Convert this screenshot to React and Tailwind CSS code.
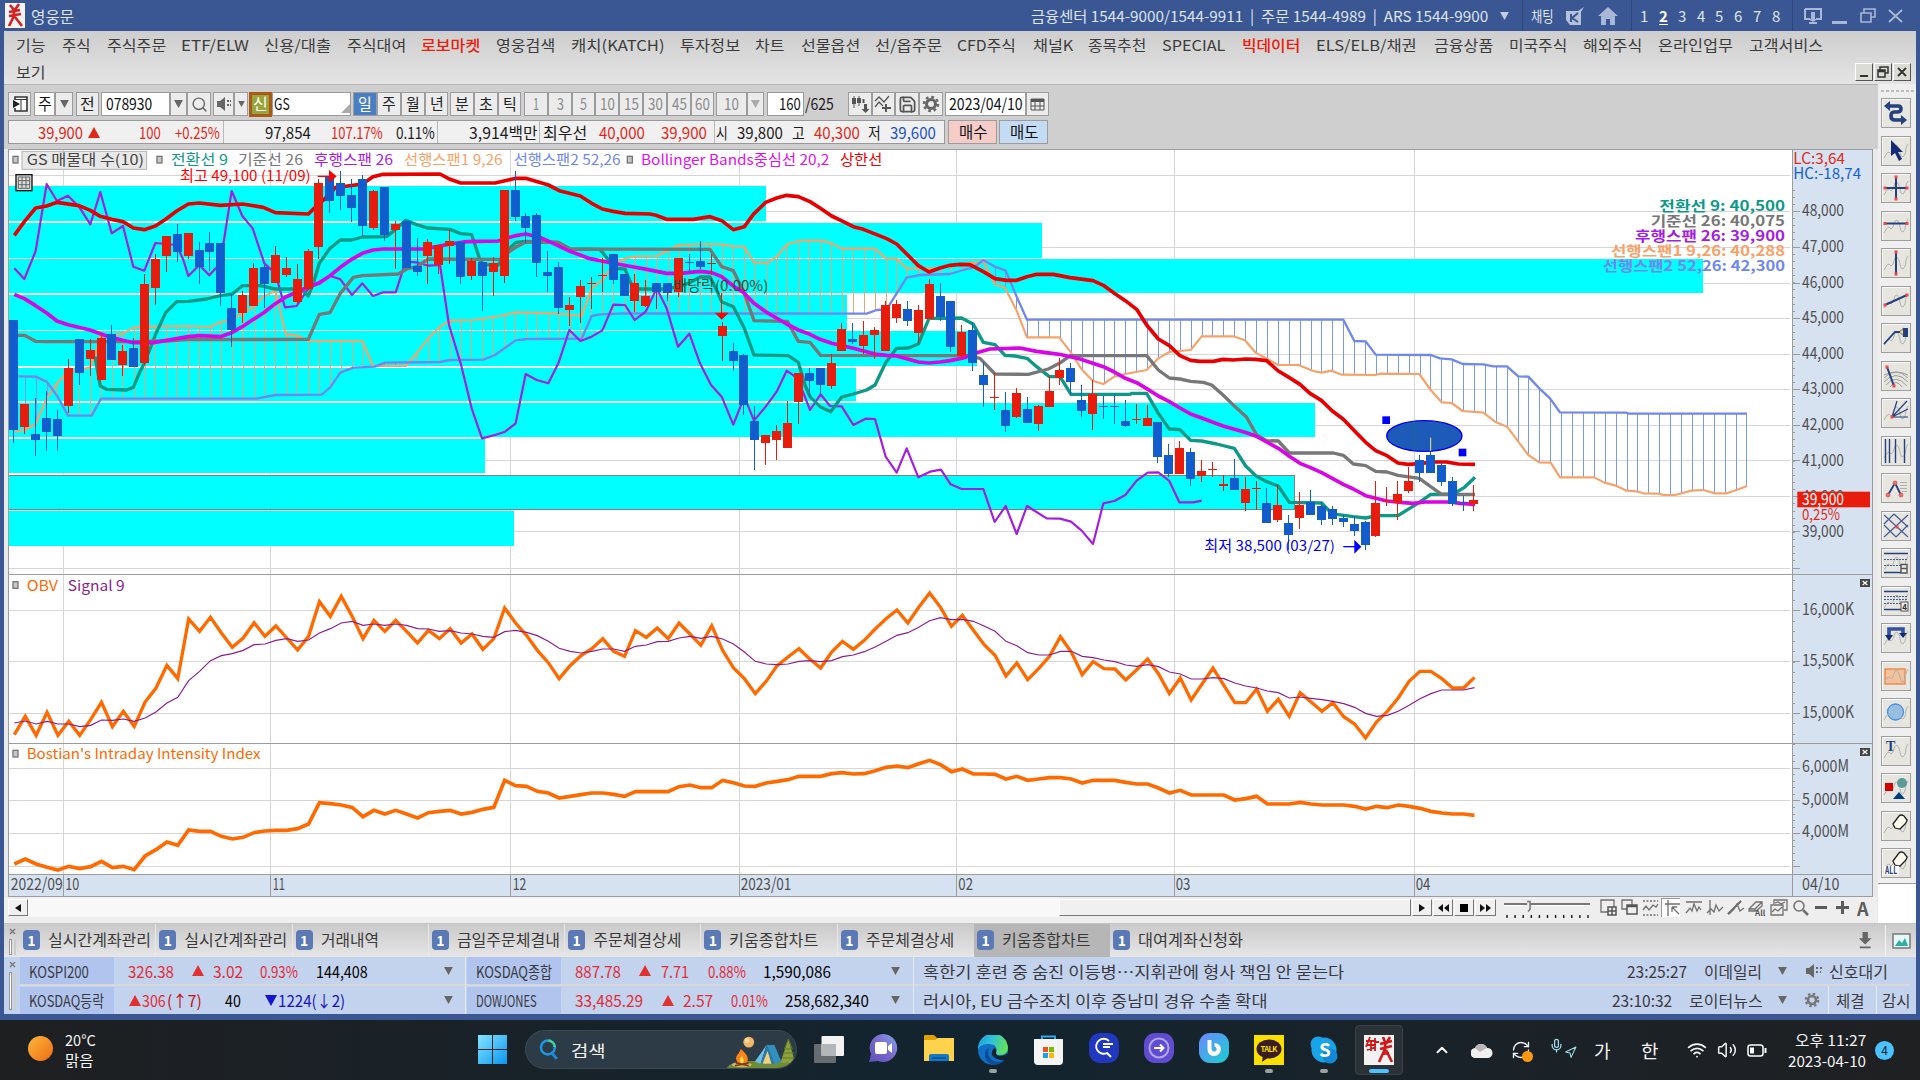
import { useLayoutEffect, useRef, useState } from "react";
import { Home, Search, Settings, Save, Calendar, Wifi, Volume2, ChevronUp, RefreshCw, Mic, Navigation } from "lucide-react";

/* Text squeezed or stretched horizontally to an exact width */
function Fit({ w, children, className = "" }) {
  const ref = useRef(null);
  const [k, setK] = useState(1);
  useLayoutEffect(() => {
    const n = ref.current.offsetWidth;
    if (n) setK(w / n);
  }, [w, children]);
  return (
    <span className={"inline-block shrink-0 whitespace-nowrap " + className} style={{ width: w }}>
      <span ref={ref} className="inline-block origin-left whitespace-pre" style={{ transform: `scaleX(${k})` }}>{children}</span>
    </span>
  );
}

/* A row of items given as [start, end, content, classes]; gaps become margins */
function Run({ from = 0, items, className = "" }) {
  let prev = from;
  return (
    <div className={"flex items-center " + className}>
      {items.map(([a, b, c, cls = ""], i) => {
        const ml = a - prev;
        prev = b;
        return (
          <div key={i} className={"flex shrink-0 items-center " + cls} style={{ marginLeft: ml, width: b - a }}>
            {typeof c === "string" ? <Fit w={b - a}>{c}</Fit> : c}
          </div>
        );
      })}
    </div>
  );
}

const Down = ({ c = "#666", s = 9 }) => (
  <svg width={s} height={s - 1} viewBox="0 0 10 9" className="mx-auto shrink-0"><path d="M0 0H10L5 9Z" fill={c} /></svg>
);
const Up = ({ c = "#e03030" }) => (
  <svg width="12" height="11" viewBox="0 0 12 11" className="shrink-0"><path d="M6 0L12 11H0Z" fill={c} /></svg>
);

/* ---------------- title bar and menu ---------------- */
function TitleBar() {
  const d = <div className="h-[31px] w-px bg-[#2c4780]" />;
  return (
    <div className="flex h-[31px] shrink-0 bg-[#3a5693] text-[15px] text-[#dde4f2]">
      <Run items={[
        [5, 25, <svg width="20" height="25" viewBox="0 0 20 25"><rect width="20" height="25" fill="#f4f4f4" /><path d="M5 2l4 5M14 1l-5 7M4 9l11-2M9 7l0 8M4 13l12-2M9 13L4 23M10 14l7 9" stroke="#d81e1e" strokeWidth="2.6" fill="none" /></svg>],
        [31, 74, "영웅문", "text-base"],
        [1031, 1488, "금융센터 1544-9000/1544-9911  |  주문 1544-4989  |  ARS 1544-9900"],
        [1498, 1510, <Down c="#c3cde2" />],
        [1522, 1523, d],
        [1531, 1554, "채팅"],
        [1565, 1586, <svg width="21" height="20" viewBox="0 0 21 20"><path d="M1 5h12l6-4-3 5v13H5L1 14Z" fill="#b4c1dd" /><path d="M6 8v8M13 7l-6 5 6 4" stroke="#3a5693" strokeWidth="2" fill="none" /></svg>],
        [1598, 1618, <svg width="20" height="18" viewBox="0 0 20 18"><path d="M10 0L20 9h-3v9h-5v-6H8v6H3V9H0Z" fill="#a9b7d6" /></svg>],
        [1631, 1632, d],
        [1640, 1648, "1"],
        [1659, 1669, <span className="border-b border-white font-bold leading-[17px] text-white">2</span>],
        [1678, 1686, "3"], [1697, 1705, "4"], [1715, 1723, "5"], [1734, 1742, "6"], [1753, 1761, "7"], [1772, 1780, "8"],
        [1792, 1793, d],
        [1804, 1822, <svg width="18" height="16" viewBox="0 0 18 16" fill="none" stroke="#a9b7d6" strokeWidth="2"><path d="M1 1H17V11H12M1 1V11H6M5 15H13" /><path d="M7 4h4v7h3l-5 3-5-3h3z" fill="#a9b7d6" stroke="none" /></svg>],
        [1832, 1848, <div className="mt-3.5 h-[3px] w-[15px] bg-[#a9b7d6]" />],
        [1860, 1876, <svg width="16" height="15" viewBox="0 0 16 15" fill="none" stroke="#a9b7d6" strokeWidth="1.6"><path d="M4 5V1H15V9H11M1 5H11V14H1Z" /></svg>],
        [1888, 1903, <svg width="15" height="14" viewBox="0 0 15 14" stroke="#a9b7d6" strokeWidth="1.8"><path d="M1 1L14 13M14 1L1 13" /></svg>],
      ]} />
    </div>
  );
}

const MENU = [
  [16, 46, "기능"], [62, 91, "주식"], [107, 166, "주식주문"], [181, 249, "ETF/ELW"], [264, 331, "신용/대출"], [347, 406, "주식대여"],
  [421, 480, "로보마켓", "font-medium text-[#e8200c]"], [496, 555, "영웅검색"], [571, 665, "캐치(KATCH)"], [680, 740, "투자정보"], [755, 785, "차트"],
  [801, 860, "선물옵션"], [875, 942, "선/옵주문"], [957, 1016, "CFD주식"], [1033, 1073, "채널K"], [1088, 1146, "종목추천"], [1162, 1226, "SPECIAL"],
  [1242, 1300, "빅데이터", "font-medium text-[#e8200c]"], [1316, 1417, "ELS/ELB/채권"], [1434, 1493, "금융상품"], [1509, 1567, "미국주식"],
  [1583, 1642, "해외주식"], [1658, 1733, "온라인업무"], [1749, 1823, "고객서비스"],
];

function MdiButton({ children }) {
  return <div className="flex h-[18px] w-[18px] items-center justify-center border border-b-[#555] border-l-white border-r-[#555] border-t-white bg-[#dcdcd6] text-[#222]">{children}</div>;
}
function MenuBar() {
  return (
    <div className="flex h-[53px] shrink-0 flex-col bg-gradient-to-b from-[#cecece] to-[#e4e4e4] text-[15px] text-[#3c3c3c]">
      <Run from={4} items={MENU} className="h-[29px] pb-0.5" />
      <div className="flex h-6 items-center justify-between pl-3 pr-[5px]">
        <Fit w={30} className="pb-0.5">보기</Fit>
        <div className="flex gap-px">
          <MdiButton><div className="mt-2 h-0.5 w-2 bg-[#333]" /></MdiButton>
          <MdiButton><svg width="12" height="12" viewBox="0 0 12 12" fill="none" stroke="#333" strokeWidth="1.5"><path d="M3 4V1H11V7H8M1 4H8V11H1ZM1 5.5H8" /></svg></MdiButton>
          <MdiButton><svg width="10" height="10" viewBox="0 0 10 10" stroke="#333" strokeWidth="1.8"><path d="M1 1L9 9M9 1L1 9" /></svg></MdiButton>
        </div>
      </div>
    </div>
  );
}

/* ---------------- toolbar ---------------- */
function Box({ children, className = "bg-[#ececec] text-[#222]" }) {
  return <div className={"flex h-6 w-full items-center justify-center border border-[#9c9c9c] " + className}>{children}</div>;
}
const fit = (w, t) => <Fit w={w} className="pb-0.5">{t}</Fit>;
const gray = "bg-[#ebebeb] text-[#8a8a8a]";
const white = "bg-white text-[#111]";

function Toolbar() {
  return (
    <div className="flex h-[65px] shrink-0 flex-col border-t border-[#b4b4b4] bg-[#cfcfcf] pt-[7px] text-base leading-none text-[#1c1c1c]">
      <Run from={4} className="h-6" items={[
        [8, 31, <Box><svg width="18" height="18" viewBox="0 0 18 18"><path d="M4 5V2H16V16H4V13" fill="#fff" stroke="#333" strokeWidth="1.6" /><path d="M4 4.5H16M10 4V16" stroke="#333" /><path d="M2 5L9 9L2 13Z" fill="#222" /></svg></Box>],
        [34, 55, <Box className={white}>{fit(14, "주")}</Box>],
        [55, 73, <Box><Down /></Box>],
        [76, 99, <Box>{fit(15, "전")}</Box>],
        [101, 170, <Box className={white}><div className="w-full pl-1">{fit(46, "078930")}</div></Box>],
        [170, 187, <Box><Down /></Box>],
        [187, 211, <Box><Search size={17} color="#666" /></Box>],
        [213, 234, <Box><svg width="16" height="16" viewBox="0 0 16 16" fill="#666"><path d="M1 5h3l5-4v14l-5-4H1z" /><path d="M11 4h2v2h-2zM14 4h1v2h-1zM11 8h2v2h-2zM14 8h1v2h-1z" /></svg></Box>],
        [234, 248, <Box><Down s={7} /></Box>],
        [249, 272, <div className="flex h-[25px] w-full items-center justify-center border-[3px] border-[#a85a18] bg-[#98a53a] text-white">{fit(15, "신")}</div>],
        [272, 351, <Box className={white}><div className="flex w-full items-end justify-between"><span className="pl-[1px]">{fit(16, "GS")}</span><svg width="9" height="9"><path d="M9 0V9H0Z" fill="#aaa" /></svg></div></Box>],
        [353, 377, <Box className="bg-[#4a7fc4] text-white">{fit(14, "일")}</Box>],
        [377, 401, <Box>{fit(14, "주")}</Box>], [401, 425, <Box>{fit(14, "월")}</Box>], [425, 448, <Box>{fit(14, "년")}</Box>],
        [450, 474, <Box>{fit(14, "분")}</Box>], [474, 498, <Box>{fit(14, "초")}</Box>], [498, 521, <Box>{fit(14, "틱")}</Box>],
        [524, 548, <Box className={gray}>{fit(6, "1")}</Box>], [548, 572, <Box className={gray}>{fit(7, "3")}</Box>], [572, 595, <Box className={gray}>{fit(7, "5")}</Box>],
        [595, 619, <Box className={gray}>{fit(15, "10")}</Box>], [619, 643, <Box className={gray}>{fit(15, "15")}</Box>], [643, 667, <Box className={gray}>{fit(15, "30")}</Box>],
        [667, 691, <Box className={gray}>{fit(15, "45")}</Box>], [691, 714, <Box className={gray}>{fit(15, "60")}</Box>],
        [716, 747, <Box className={gray}>{fit(15, "10")}</Box>], [747, 764, <Box className={gray}><Down c="#aaa" /></Box>],
        [767, 804, <Box className={white}><div className="ml-2">{fit(22, "160")}</div></Box>],
        [805, 834, fit(29, "/625")],
        [848, 872, <Box><svg width="19" height="18" viewBox="0 0 19 18" fill="#555"><path d="M2.500 1h1v12h-1zM7.500 1h1v10h-1z" /><path d="M1 3H5V9H1ZM6 3H10V8H6ZM11.500 4h2v4h-2z" /><path d="M13 9h3v5h2.500l-4 4l-4-4h2.500z" /></svg></Box>],
        [872, 895, <Box><svg width="19" height="18" viewBox="0 0 19 18" fill="none" stroke="#555" strokeWidth="1.300"><path d="M1 6L5 2L10 7L15 1M1 12L5 7L9 11" /><path d="M12 9V17M8 13H17" strokeWidth="2" /></svg></Box>],
        [895, 919, <Box><Save size={19} color="#555" strokeWidth={2.2} /></Box>],
        [919, 943, <Box><svg width="18" height="18" viewBox="0 0 18 18" fill="none" stroke="#666"><circle cx="9" cy="9" r="4.500" strokeWidth="3" /><circle cx="9" cy="9" r="7" strokeWidth="2.500" strokeDasharray="2.750 2.750" /></svg></Box>],
        [945, 1026, <Box className={white}>{fit(74, "2023/04/10")}</Box>],
        [1026, 1049, <Box><svg width="15" height="14" viewBox="0 0 15 14" fill="none" stroke="#555"><path d="M1 2H14V13H1ZM1 9H14M5 5V13M10 5V13" /><path d="M1 3.500H14" strokeWidth="3" /></svg></Box>],
      ]} />
      <div className="mt-1 flex">
        <Run from={4} className="h-6" items={[
          [8, 945, <div className="flex h-6 w-full items-center border border-[#999] bg-[#f0f0f0]">
            <Run from={9} items={[
              [38, 83, "39,900", "text-[#e02818]"], [88, 101, <Up c="#e02818" />], [139, 161, "100", "text-[#e02818]"], [175, 220, "+0.25%", "text-[#e02818]"],
              [223, 224, <div className="h-[22px] w-px bg-[#b8b8b8]" />],
              [265, 311, "97,854"], [331, 383, "107.17%", "text-[#e02818]"], [396, 435, "0.11%"],
              [437, 438, <div className="h-[22px] w-px bg-[#b8b8b8]" />],
              [469, 537, "3,914백만"], [539, 540, <div className="h-[22px] w-px bg-[#b8b8b8]" />],
              [543, 587, "최우선"], [599, 645, "40,000", "text-[#e02818]"], [661, 707, "39,900", "text-[#e02818]"],
              [714, 715, <div className="h-[22px] w-px bg-[#b8b8b8]" />],
              [716, 728, "시"], [737, 783, "39,800"], [792, 805, "고"], [814, 860, "40,300", "text-[#e02818]"], [868, 881, "저"], [890, 936, "39,600", "text-[#1a52c8]"],
            ]} />
          </div>],
          [948, 997, <Box className="bg-[#f5ccc8] text-[#111]">{fit(28, "매수")}</Box>],
          [999, 1048, <Box className="bg-[#c3dcf3] text-[#111]">{fit(28, "매도")}</Box>],
        ]} />
      </div>
    </div>
  );
}

/* ---------------- chart data (1 unit = 1/3 px) ---------------- */
const X = (i) => 43 + i * 32.69;
const pts = (s) => s.trim().split(/\s+/).map((p) => p.split(",").map(Number));

const UPPER = "43,256 73,215 107,174 140,168 171,157 237,167 271,181 301,199 335,208 369,215 400,234 433,239 466,228 497,208 530,183 565,162 598,159 661,166 727,162 790,172 826,188 925,192 958,160 988,135 1005,113 1021,111 1087,102 1119,80 1150,73 1320,72 1350,88 1382,99 1485,99 1515,92 1547,85 1577,85 1645,105 1678,122 1741,138 1775,160 1807,177 1840,184 1875,190 1950,192 1968,196 2000,208 2080,208 2130,200 2165,212 2200,239 2233,230 2260,193 2297,157 2330,144 2360,136 2395,140 2430,155 2460,174 2495,198 2530,215 2560,230 2590,238 2630,254 2660,266 2690,282 2720,312 2755,347 2787,366 2820,354 2850,346 2880,343 2910,344 2950,365 2985,386 3020,391 3050,391 3081,380 3110,373 3160,373 3210,383 3279,392 3310,406 3343,430 3376,452 3410,478 3440,525 3475,567 3508,587 3540,617 3572,631 3600,634 3640,634 3669,628 3700,630 3737,627 3767,628 3800,632 3835,663 3868,683 3900,703 3930,730 3965,752 3997,783 4030,808 4063,842 4097,877 4127,902 4161,917 4194,939 4224,943 4258,941 4300,936 4340,936 4375,942 4425,943";
const MID = "43,433 73,446 107,467 140,489 171,513 204,524 270,540 320,558 365,570 400,578 460,578 500,571 565,560 600,557 661,560 695,548 727,530 760,508 790,489 826,461 857,441 925,411 958,399 990,377 1021,352 1055,328 1087,310 1119,300 1150,297 1270,297 1310,290 1350,282 1400,275 1495,273 1520,264 1547,257 1577,252 1620,262 1660,280 1710,304 1770,326 1820,336 1885,348 1940,358 2000,370 2040,370 2100,364 2135,368 2165,380 2200,408 2233,430 2260,458 2300,487 2360,522 2395,540 2430,553 2460,568 2495,580 2560,595 2625,612 2660,616 2690,618 2720,626 2755,636 2787,639 2820,636 2850,632 2890,624 2930,608 2970,597 3060,594 3110,604 3178,613 3240,627 3310,650 3343,666 3376,685 3410,698 3440,716 3475,738 3508,755 3540,774 3572,792 3605,804 3669,828 3735,847 3767,858 3800,876 3835,895 3868,919 3900,940 3930,952 3965,968 4030,1003 4060,1017 4097,1037 4127,1045 4161,1053 4210,1058 4240,1060 4275,1056 4350,1056 4380,1060 4425,1063";
const TENKAN = "285,620 301,708 320,718 380,720 400,712 420,665 433,640 466,555 497,488 530,455 565,454 620,447 661,437 697,432 727,407 780,407 826,417 890,417 905,420 925,438 940,400 958,340 990,295 1021,270 1055,270 1087,261 1160,260 1187,238 1217,211 1250,224 1282,234 1350,238 1382,251 1415,254 1440,330 1450,344 1495,345 1515,310 1547,277 1577,274 1675,277 1710,297 1800,298 1830,335 1840,355 1875,357 1893,400 1915,417 2000,417 2040,408 2070,398 2100,381 2130,381 2145,410 2165,455 2200,470 2233,535 2262,615 2365,617 2395,637 2415,705 2430,740 2460,770 2492,785 2525,741 2560,732 2600,720 2625,705 2657,638 2690,595 2725,594 2755,582 2787,505 2885,504 2920,523 2950,577 2985,584 3015,616 3045,618 3081,625 3110,650 3148,680 3180,680 3213,733 3390,733 3395,730 3440,730 3475,790 3508,837 3540,839 3572,871 3605,873 3650,882 3703,895 3737,948 3767,977 3800,995 3835,1008 3868,1057 3965,1059 3985,1080 4010,1093 4060,1100 4097,1104 4130,1097 4194,1097 4224,1078 4258,1057 4292,1033 4360,1032 4392,1013 4425,982";
const KIJUN = "43,556 73,556 107,574 140,575 400,575 500,573 560,569 925,568 958,493 990,488 1021,430 1060,382 1087,377 1195,372 1220,357 1250,350 1285,327 1500,328 1520,310 1547,292 1577,276 1675,277 1710,297 2130,298 2165,350 2200,362 2233,430 2262,512 2362,514 2395,574 2430,577 2462,616 2900,617 2940,625 2985,672 3085,673 3145,657 3178,640 3211,617 3440,617 3475,660 3508,684 3540,687 3572,694 3610,697 3635,705 3669,735 3703,768 3740,802 3770,855 3800,872 3835,873 3868,909 4000,909 4030,916 4060,942 4097,947 4127,964 4161,966 4194,976 4258,985 4292,1010 4325,1033 4425,1033";
const CHIKOU = "43,355 73,387 107,303 140,102 171,153 204,137 237,170 271,223 301,126 335,250 369,228 400,350 433,362 466,279 530,285 550,330 565,378 598,345 628,376 661,340 695,123 727,198 758,235 793,340 826,370 855,472 890,468 925,415 990,377 1021,388 1056,435 1087,400 1119,438 1150,427 1187,427 1217,335 1250,337 1285,347 1320,345 1347,525 1382,640 1415,775 1446,865 1485,855 1515,845 1547,820 1577,672 1610,690 1645,700 1675,640 1708,540 1741,573 1775,560 1807,541 1840,464 1875,465 1904,510 1937,485 1970,415 2000,475 2034,590 2068,551 2100,640 2133,705 2165,740 2200,824 2233,740 2262,812 2297,770 2330,725 2360,662 2393,685 2430,780 2462,733 2490,768 2525,769 2560,825 2597,806 2625,807 2657,920 2690,968 2720,895 2755,982 2790,965 2823,959 2852,1003 2885,1017 2950,1017 2984,1116 3017,1068 3050,1152 3081,1068 3100,1080 3140,1105 3180,1106 3213,1115 3245,1142 3279,1182 3310,1060 3343,1053 3376,1035 3410,992 3443,968 3475,967 3508,993 3538,1057 3580,1057 3605,1052";
const SPAN1 = "43,845 73,840 107,822 140,745 171,700 204,665 237,660 270,652 290,600 301,560 369,551 400,533 433,530 560,528 630,531 661,516 695,510 727,490 760,472 790,440 826,422 857,553 890,556 925,573 1087,573 1119,648 1217,648 1250,610 1285,565 1320,530 1350,512 1420,510 1500,498 1547,487 1670,490 1745,498 1775,415 1807,390 1840,345 1875,325 1910,319 1970,318 2000,304 2034,285 2115,282 2165,283 2200,289 2233,290 2262,338 2305,338 2330,320 2362,283 2400,272 2465,272 2495,280 2525,296 2625,296 2657,325 2690,326 2720,355 2820,354 2850,346 2950,335 2985,403 3015,413 3050,482 3081,562 3178,562 3211,605 3245,658 3279,693 3310,702 3343,680 3376,672 3440,660 3475,625 3508,606 3572,600 3605,559 3700,559 3735,571 3767,608 3835,645 3895,645 3940,663 3965,668 3995,662 4025,674 4127,675 4140,671 4258,672 4292,720 4325,757 4355,759 4388,783 4450,788 4485,815 4521,830 4555,875 4585,915 4618,937 4652,938 4680,982 4783,982 4813,998 4845,1006 4880,1022 4910,1024 4930,1030 4975,1031 4990,1035 5025,1035 5075,1022 5110,1020 5145,1030 5180,1030 5210,1020 5241,1008";
const SPAN2 = "55,679 107,680 140,695 171,737 204,797 275,797 303,746 770,746 826,735 965,734 990,713 1021,668 1060,653 1125,650 1155,638 1320,636 1350,630 1450,629 1485,615 1547,571 1580,567 1745,566 1775,498 1800,493 1870,490 2600,491 2630,480 2660,478 2690,430 2720,383 2760,375 2850,372 2880,363 2925,350 2950,330 2985,350 3017,362 3050,440 3081,509 4030,509 4063,573 4097,574 4127,614 4292,615 4320,625 4355,628 4388,642 4450,643 4480,649 4521,649 4555,679 4585,680 4618,715 4650,745 4680,787 4880,788 4885,791 5241,791";

/* direction, body top, body bottom, high, low */
const CANDLES = `B 511 839 511 880;R 762 831 762 853;B 851 869 743 918;B 803 847 723 903;B 807 858 780 903;R 654 767 627 790;B 567 669 567 704;R 600 626 567 678;R 563 689 553 689;B 551 629 525 629;R 604 644 585 678;B 593 652 563 652;R 402 640 372 645;R 327 415 312 464;R 259 317 257 367;B 252 306 222 336;R 248 317 248 328;B 300 350 277 401;B 279 306 247 362;B 279 430 279 467;B 473 539 433 592;R 436 490 424 520;R 353 467 339 467;B 352 401 345 475;R 316 400 289 400;R 353 375 322 381;R 387 457 341 461;R 304 416 297 420;R 99 291 87 328;B 82 152 70 190;B 99 137 64 180;B 136 175 87 217;B 87 228 76 258;R 124 235 120 240;B 110 255 110 272;R 221 239 213 356;B 213 354 213 354;B 349 366 263 377;R 275 318 268 401;R 286 344 286 372;R 274 287 240 341;B 275 381 275 401;R 333 378 324 389;B 337 378 337 483;R 338 367 320 438;R 120 378 120 400;B 120 202 64 212;B 198 235 188 280;B 195 340 188 381;B 366 378 304 426;B 352 475 335 493;R 466 479 440 528;R 409 441 390 520;R 399 402 380 476;R 375 378 325 426;B 312 389 312 403;B 373 437 373 437;R 398 453 371 485;R 439 467 390 472;B 399 426 399 476;B 399 430 399 453;R 325 425 325 440;B 335 338 312 370;B 334 351 274 356;R 340 343 312 375;R 529 557 517 632;B 604 632 578 662;B 615 764 612 794;B 814 869 769 960;R 856 880 856 944;R 844 869 825 930;R 818 895 754 895;R 669 757 669 822;B 669 692 653 742;B 653 704 653 733;R 638 709 612 716;R 537 603 518 603;B 567 577 518 582;R 556 588 514 613;R 541 554 530 626;R 466 602 454 602;R 462 505 451 520;B 477 513 454 528;R 480 549 466 580;R 403 506 387 506;B 439 502 398 513;B 454 592 454 607;R 547 618 526 628;B 541 640 517 662;B 676 704 637 771;R 741 744 670 779;B 780 828 727 847;R 728 801 713 805;B 776 820 740 820;R 768 821 766 843;R 724 772 678 772;R 660 683 623 704;B 654 696 639 735;B 750 783 705 801;R 731 791 690 839;B 767 770 738 806;B 769 772 732 821;B 814 828 750 832;R 806 809 761 821;R 803 828 765 828;B 817 921 817 940;B 915 971 881 982;R 893 971 874 971;B 907 986 893 1008;R 964 978 930 996;R 957 960 937 982;R 1002 1008 976 1022;B 983 1019 927 1019;R 1016 1060 982 1083;R 1013 1018 993 1079;B 1058 1120 1013 1120;R 1065 1109 1005 1116;B 1118 1154 1095 1200;R 1064 1105 1027 1136;B 1055 1094 1020 1094;B 1069 1109 1057 1124;B 1076 1106 1069 1124;B 1103 1116 1095 1131;B 1122 1142 1097 1158;B 1117 1185 1113 1199;R 1058 1158 993 1162;R 1050 1054 1012 1068;R 1031 1058 993 1109;R 994 1023 952 1030;B 930 970 916 996;B 915 970 903 970;B 945 996 940 1008;B 994 1062 982 1068;B 1057 1060 1038 1083;R 1050 1063 1005 1083`
  .split(";").map((c) => { const [d, ...n] = c.trim().split(" "); return [d, ...n.map(Number)]; });

const OBV = [510, 455, 512, 443, 512, 470, 512, 465, 413, 486, 440, 485, 412, 370, 302, 342, 163, 200, 158, 205, 248, 220, 174, 215, 184, 220, 256, 215, 111, 155, 95, 155, 222, 167, 200, 167, 200, 235, 197, 222, 192, 235, 208, 254, 222, 130, 175, 212, 257, 294, 342, 303, 273, 252, 222, 260, 275, 198, 218, 190, 222, 175, 208, 242, 183, 257, 310, 342, 387, 350, 303, 277, 252, 283, 310, 262, 230, 254, 227, 193, 162, 136, 175, 128, 85, 128, 185, 152, 196, 240, 272, 334, 295, 345, 312, 275, 216, 262, 330, 291, 312, 313, 346, 315, 283, 327, 387, 340, 406, 358, 310, 362, 414, 414, 373, 440, 404, 455, 384, 412, 440, 414, 456, 478, 520, 472, 440, 400, 350, 320, 320, 342, 370, 370, 338];
const SIGNAL = [475, 469, 478, 470, 478, 478, 486, 482, 466, 467, 463, 470, 460, 442, 415, 398, 348, 320, 288, 273, 267, 257, 240, 238, 227, 222, 230, 226, 205, 192, 175, 170, 182, 178, 182, 178, 182, 192, 193, 200, 198, 205, 208, 215, 218, 201, 197, 203, 213, 230, 251, 260, 265, 260, 253, 253, 260, 245, 241, 231, 230, 220, 215, 221, 215, 223, 238, 262, 290, 298, 300, 298, 290, 288, 291, 288, 276, 271, 261, 247, 230, 212, 204, 188, 168, 159, 165, 164, 170, 184, 200, 230, 243, 264, 271, 271, 260, 260, 275, 279, 286, 291, 301, 305, 300, 306, 322, 328, 343, 343, 339, 342, 355, 364, 370, 379, 384, 400, 397, 401, 405, 410, 417, 428, 446, 455, 452, 440, 422, 402, 387, 376, 376, 376, 369];
const BII = [898, 883, 898, 908, 916, 905, 912, 906, 890, 909, 905, 915, 874, 855, 832, 842, 796, 800, 800, 815, 823, 818, 804, 799, 797, 797, 792, 778, 714, 717, 721, 728, 756, 737, 748, 737, 748, 760, 744, 740, 737, 748, 743, 734, 728, 647, 663, 665, 680, 685, 700, 695, 690, 685, 685, 689, 695, 681, 681, 681, 681, 666, 661, 669, 669, 647, 654, 664, 665, 655, 650, 645, 635, 635, 635, 627, 624, 628, 627, 618, 608, 604, 609, 597, 587, 600, 621, 613, 628, 628, 629, 643, 635, 647, 643, 639, 639, 643, 655, 647, 647, 647, 653, 658, 658, 670, 685, 677, 691, 691, 691, 691, 706, 702, 695, 718, 718, 718, 713, 718, 721, 721, 721, 725, 733, 725, 729, 721, 725, 731, 740, 745, 748, 748, 752];

const series = (a) => a.map((v, i) => `${X(i).toFixed(1)},${v + 1244}`).join(" ");

function at(list, x) {
  for (let i = 1; i < list.length; i++) {
    if (x <= list[i][0]) {
      const [x0, y0] = list[i - 1], [x1, y1] = list[i];
      return y0 + ((y1 - y0) * (x - x0)) / (x1 - x0);
    }
  }
  return list[list.length - 1][1];
}
const S1 = pts(SPAN1), S2 = pts(SPAN2);
const HATCH = Array.from({ length: 159 }, (_, k) => {
  const x = X(k + 1);
  return [x, at(S1, x), at(S2, x)];
});

const VOLUME_BARS = [[108, 213, 2298], [218, 323, 3127], [326, 430, 5108], [436, 540, 2541], [544, 648, 2932], [653, 753, 2568], [758, 861, 3945], [866, 970, 1455], [1083, 1187, 1541]];
const BAR_GAPS = [[215, 2298], [324, 3127], [433, 2541], [542, 2541], [650, 2568], [755, 2568], [863, 1455]];
const H_LINES = [76, 184, 291, 399, 504, 612, 718, 826, 932, 1040, 1145, 1254, 1381, 1535, 1689, 1854, 1951, 2049, 2150];
const V_LINES = [190, 811, 1531, 2218, 2870, 3523, 4243];
const AXIS = [[184, "48,000"], [291, "47,000"], [399, "46,000"], [504, "45,000"], [612, "44,000"], [718, "43,000"], [826, "42,000"], [932, "41,000"], [1040, "40,000"], [1145, "39,000"]];

const range = (a, b, s) => { const r = []; for (let v = a; v < b; v += s) r.push(v); return r; };
const MINOR = [...range(120, 1254, 21.4), ...range(1290, 1800, 30.8), ...range(1815, 2150, 19.7)];

/* Text centred on y and spanning x..x2 */
function T({ x, x2, y, c, s = 43, b, children }) {
  return (
    <text x={x} y={y + s * 0.35} fill={c} fontSize={s} fontWeight={b ? 700 : 400} textLength={x2 - x} lengthAdjust="spacingAndGlyphs">{children}</text>
  );
}
const Mark = ({ x, y }) => <rect x={x - 7} y={y - 10} width="15" height="20" fill="#c8c8c8" stroke="#777" strokeWidth="4" />;
const Close = ({ y }) => (
  <g><rect x="5580" y={y - 12} width="30" height="24" fill="#444" /><path d={`M5588 ${y - 6}L5602 ${y + 6}M5602 ${y - 6}L5588 ${y + 6}`} stroke="#fff" strokeWidth="4" /></g>
);

function Chart() {
  return (
    <svg width="1865" height="748" viewBox="24 -3 5595 2244" className="block shrink-0" fill="none">
      <rect x="24" y="-3" width="5595" height="2244" fill="#fff" />
      <g shapeRendering="crispEdges">
        <rect x="5376" y="-3" width="243" height="2244" fill="#d6e2f0" />
        <rect x="24" y="2174" width="5595" height="66" fill="#d6e2f0" />
        {H_LINES.map((y) => <path key={y} d={`M24 ${y}H5370`} stroke="#d6d6d6" strokeWidth="3" />)}
        {V_LINES.map((x) => <path key={x} d={`M${x} 0V2173`} stroke="#d6d6d6" strokeWidth="3" />)}
        {BAR_GAPS.map(([y, r]) => <path key={y} d={`M24 ${y}H${r}`} stroke="#f6ffff" strokeWidth="6" />)}
        {VOLUME_BARS.map(([a, b, r]) => <rect key={a} x="24" y={a} width={r - 24} height={b - a} fill="#0ff" />)}
        <rect x="22" y="976" width="3861" height="101" fill="#0ff" stroke="#808080" strokeWidth="3" />
        {HATCH.map(([x, a, b]) => <path key={x} d={`M${x} ${a}V${b}`} stroke={a < b ? "#e0a878" : "#7a98f2"} strokeWidth="3" />)}
      </g>
      <g strokeLinejoin="round">
        <polyline points={SPAN1} stroke="#f7a268" strokeWidth="6.500" />
        <polyline points={SPAN2} stroke="#7088ee" strokeWidth="7" />
        <polyline points={CHIKOU} stroke="#a41ee0" strokeWidth="6.500" />
        <polyline points={TENKAN} stroke="#0c9a86" strokeWidth="10" />
        <polyline points={KIJUN} stroke="#777" strokeWidth="10" />
        <polyline points={UPPER} stroke="#e80000" strokeWidth="11" />
        <polyline points={MID} stroke="#d806e4" strokeWidth="11" />
      </g>
      <g shapeRendering="crispEdges">
        {CANDLES.map(([d, t, b, h, l], i) => {
          const c = d === "R" ? "#e81c0c" : "#125ccc";
          const x = Math.round(X(i) / 3) * 3;
          return <g key={i}><rect x={x - 2} y={h} width="3" height={l - h} fill={c} /><rect x={x - 14} y={t} width="27" height={Math.max(b - t, 3)} fill={c} /></g>;
        })}
        <path d="M2165 430V488" stroke="#e81c0c" strokeWidth="3" />
      </g>
      <path d="M2144 488H2186L2165 509Z" fill="#f00" />
      <g shapeRendering="crispEdges" stroke="#9c9c9c" strokeWidth="3">
        <path d="M24 -1H5619M24 1272H5619M24 1779H5619M24 2173H5619M24 2239H5619M5376 0V2240M5617 0V2240M25 0V2240" />
        {V_LINES.map((x) => <path key={x} d={`M${x} 2173V2240`} />)}
        {MINOR.map((y) => <path key={y} d={`M5376 ${y}h9`} />)}
        {H_LINES.slice(1).map((y) => <path key={y} d={`M5376 ${y}h23`} />)}
      </g>
      <g strokeLinejoin="miter">
        <polyline points={series(OBV)} stroke="#ff6a00" strokeWidth="10" />
        <polyline points={series(SIGNAL)} stroke="#8c1e8c" strokeWidth="3.500" />
        <polyline points={series(BII)} stroke="#ff6a00" strokeWidth="11" />
      </g>

      {/* legends */}
      <Mark x={46} y={29} />
      <rect x="66" y="4" width="374" height="54" fill="#e8e8e8" stroke="#b4b4b4" strokeWidth="3" />
      <T x={80} x2={432} y={31} c="#444">GS 매물대 수(10)</T>
      <Mark x={478} y={29} />
      <T x={512} x2={684} y={31} c="#0c9a86">전환선 9</T>
      <T x={714} x2={909} y={31} c="#777">기준선 26</T>
      <T x={942} x2={1179} y={31} c="#a41ee0">후행스팬 26</T>
      <T x={1212} x2={1508} y={31} c="#f7a268">선행스팬1 9,26</T>
      <T x={1541} x2={1862} y={31} c="#7088ee">선행스팬2 52,26</T>
      <Mark x={1889} y={29} />
      <T x={1923} x2={2488} y={31} c="#e010e8">Bollinger Bands중심선 20,2</T>
      <T x={2520} x2={2647} y={31} c="#f00000">상한선</T>
      <T x={540} x2={932} y={78} c="#f00">최고 49,100 (11/09)</T>
      <path d="M953 79H990" stroke="#f00" strokeWidth="4" /><path d="M987 60L1010 79L987 99Z" fill="#f00" />
      <g><rect x="48" y="74" width="48" height="48" fill="#dcdcdc" stroke="#111" strokeWidth="4" /><path d="M55 81H89V115H55ZM55 92H89M55 104H89M66 81V115M78 81V115" stroke="#666" strokeWidth="3" /></g>
      <T x={2020} x2={2305} y={407} c="#2c4a3c">배당락(0.00%)</T>
      <T x={3613} x2={4005} y={1187} c="#0000f4">최저 38,500 (03/27)</T>
      <path d="M4030 1190H4066" stroke="#00f" strokeWidth="4" /><path d="M4063 1169L4084 1190L4063 1211Z" fill="#00f" />
      <T x={4978} x2={5355} y={169} c="#0c9a86" s={42} b>전환선 9: 40,500</T>
      <T x={4952} x2={5355} y={214} c="#777" s={42} b>기준선 26: 40,075</T>
      <T x={4905} x2={5355} y={259} c="#a41ee0" s={42} b>후행스팬 26: 39,900</T>
      <T x={4833} x2={5355} y={304} c="#f7a268" s={42} b>선행스팬1 9,26: 40,288</T>
      <T x={4808} x2={5355} y={349} c="#7088ee" s={42} b>선행스팬2 52,26: 42,300</T>
      <T x={5380} x2={5535} y={27} c="#e02818" s={46}>LC:3,64</T>
      <T x={5380} x2={5583} y={72} c="#1460d0" s={46}>HC:-18,74</T>
      <Mark x={46} y={1305} />
      <T x={80} x2={174} y={1307} c="#ff6a00">OBV</T>
      <T x={203} x2={374} y={1307} c="#8c1e8c">Signal 9</T>
      <Mark x={46} y={1811} />
      <T x={80} x2={782} y={1813} c="#ff6a00">Bostian's Intraday Intensity Index</T>

      {/* axis labels */}
      {AXIS.map(([y, t]) => <T key={t} x={5406} x2={5532} y={y - 3} c="#505050" s={50}>{t}</T>)}
      <rect x="5392" y="1025" width="218" height="47" fill="#e81c0c" />
      <T x={5406} x2={5532} y={1048} c="#fff" s={50}>39,900</T>
      <T x={5406} x2={5520} y={1093} c="#e02818" s={46}>0,25%</T>
      <T x={5406} x2={5562} y={1378} c="#505050" s={50}>16,000K</T>
      <T x={5406} x2={5562} y={1531} c="#505050" s={50}>15,500K</T>
      <T x={5406} x2={5562} y={1685} c="#505050" s={50}>15,000K</T>
      <T x={5406} x2={5547} y={1849} c="#505050" s={50}>6,000M</T>
      <T x={5406} x2={5547} y={1946} c="#505050" s={50}>5,000M</T>
      <T x={5406} x2={5547} y={2044} c="#505050" s={50}>4,000M</T>
      <Close y={1299} /><Close y={1806} />
      <T x={32} x2={188} y={2202} c="#505050" s={50}>2022/09</T>
      <T x={196} x2={238} y={2202} c="#505050" s={50}>10</T>
      <T x={818} x2={855} y={2202} c="#505050" s={50}>11</T>
      <T x={1538} x2={1579} y={2202} c="#505050" s={50}>12</T>
      <T x={2222} x2={2374} y={2202} c="#505050" s={50}>2023/01</T>
      <T x={2875} x2={2919} y={2202} c="#505050" s={50}>02</T>
      <T x={3527} x2={3571} y={2202} c="#505050" s={50}>03</T>
      <T x={4247} x2={4291} y={2202} c="#505050" s={50}>04</T>
      <T x={5406} x2={5518} y={2202} c="#505050" s={50}>04/10</T>

      {/* marker ellipse with its handles */}
      <ellipse cx="4273" cy="858" rx="113" ry="46" fill="#1e5ab8" stroke="#0000f0" strokeWidth="4" />
      <path d="M4243 814V903" stroke="#1a6a90" strokeWidth="3" />
      <path d="M4292 863V903" stroke="#e8e890" strokeWidth="3" />
      <rect x="4147" y="799" width="23" height="23" fill="#00f" /><rect x="4376" y="896" width="23" height="23" fill="#00f" />
    </svg>
  );
}

/* ---------------- playback strip under the chart ---------------- */
const Cap = ({ w, children }) => (
  <div className="flex h-[17px] items-center justify-center border border-b-[#777] border-l-white border-r-[#777] border-t-white bg-[#f0f0f0]" style={{ width: w }}>{children}</div>
);
const ic = (d, extra) => (
  <svg width="18" height="18" viewBox="0 0 18 18" fill="none" stroke="#707070" strokeWidth="1.3"><path d={d} />{extra}</svg>
);
function Playback() {
  return (
    <div className="h-[27px] w-[1873px] bg-[#eee]">
      <Run from={4} className="h-[21px]" items={[
        [8, 28, <Cap w={20}><svg width="6" height="8"><path d="M6 0V8L0 4Z" fill="#111" /></svg></Cap>],
        [28, 1059, <div className="h-[19px] w-full bg-[#f8f8f8]" />],
        [1059, 1411, <Cap w={352} />],
        [1412, 1432, <Cap w={20}><svg width="6" height="8"><path d="M0 0V8L6 4Z" fill="#111" /></svg></Cap>],
        [1433, 1453, <Cap w={20}><svg width="11" height="8"><path d="M5 0V8L0 4ZM11 0V8L6 4Z" fill="#111" /></svg></Cap>],
        [1454, 1474, <Cap w={20}><div className="h-2 w-2 bg-black" /></Cap>],
        [1475, 1496, <Cap w={21}><svg width="11" height="8"><path d="M0 0V8L5 4ZM6 0V8L11 4Z" fill="#111" /></svg></Cap>],
        [1503, 1592, <svg width="89" height="20" viewBox="0 0 89 20"><path d="M1 6H87" stroke="#777" strokeWidth="2" /><path d="M1 7.500H87" stroke="#fff" /><path d="M24 3.500h3v8l-2 2" fill="#eee" stroke="#777" strokeWidth="1.500" />{range(4, 89, 8.1).map((x) => <path key={x} d={`M${x} 17V20`} stroke="#222" strokeWidth="1.500" />)}</svg>],
        [1600, 1618, ic("M8 13H1V1H14V8", <path d="M8 8H16V16H8ZM12 8V16M8 12H16" stroke="#555" strokeWidth="1.500" />)],
        [1621, 1639, ic("M6 10H1V1H11V6", <path d="M6 6H16V15H6ZM6 7.500H16" stroke="#555" strokeWidth="1.500" />)],
        [1642, 1660, ic("M1 11L4 7L7 11L11 6L14 8L16 5", <path d="M1 2H16M1 16H16" strokeDasharray="2 1.500" />)],
        [1661, 1682, <div className="border-l border-t border-[#999] bg-white">{ic("M3 5H18M6 1V17", <path d="M10 8L17 15M10 8V13M10 8H15" />)}</div>],
        [1685, 1703, ic("M1 3H17M1 14L5 9L7 12L9 5L12 12L14 8L16 11")],
        [1706, 1724, ic("M4 1V16M1 14L5 10L8 13L10 6L13 12L17 8")],
        [1727, 1745, ic("M1 15L14 2M2 15L7 10L10 5L13 12L17 9", <path d="M1 15L14 2" strokeWidth="2" />)],
        [1748, 1767, ic("M1 10L8 3H14V7L8 12H1ZM1 10H7L14 3M7 10V12", <text x="7" y="17" fontSize="8" fontWeight="700" fill="#555" stroke="none">All</text>)],
        [1770, 1788, ic("M4 5V1H17V11H14M1 6H13V16H1Z", <path d="M2 13L5 10L8 12L12 8M5 4L8 3L11 5L15 3" />)],
        [1792, 1809, <svg width="17" height="17" viewBox="0 0 17 17" fill="none" stroke="#707070"><circle cx="7" cy="7" r="5" strokeWidth="1.500" /><path d="M11 11L16 16" strokeWidth="2.500" /></svg>],
        [1815, 1827, <div className="h-[3px] w-3 bg-[#5c5c5c]" />],
        [1836, 1849, <svg width="13" height="13"><path d="M6.500 0V13M0 6.500H13" stroke="#5c5c5c" strokeWidth="3" /></svg>],
        [1857, 1869, <Fit w={12} className="text-lg font-bold leading-5 text-[#5c5c5c]">A</Fit>],
      ]} />
    </div>
  );
}

/* ---------------- drawing tools ---------------- */
const red = (x, y) => <rect key={`${x}-${y}`} x={x - 1.5} y={y - 1.5} width="3" height="3" fill="#f04848" stroke="none" />;
const Hill = <path d="M3 22L6 17L8 16L10 18L12 16L14 10L16 9L18 12L20 20L22 21L24 18L25 12L27 8" stroke="#b4b4b0" />;
const Eraser = <path d="M12 13L18 5Q20 3 23 5L26 9Q26 11 24 13L19 18Q17 18 14 17Z" fill="#fffdf0" stroke="#222" strokeWidth="1.300" />;
const navy = "#24407e";
const TOOLS = [
  <><path d="M6 8H17Q20 8 20 11Q20 14 16 14H13Q10 14 10 18Q10 22 14 22H21" stroke={navy} strokeWidth="3.600" /><path d="M9 3V13L3 8ZM20 17V27L26 22Z" fill={navy} /></>,
  <>{Hill}<path d="M10 4V20L14 17L18 25L21 23L17 16H22Z" fill="#142a74" stroke="none" /></>,
  <>{Hill}<path d="M4 15H26M15 4V26" stroke={navy} strokeWidth="2" />{red(4, 15)}{red(26, 15)}{red(15, 4)}{red(15, 26)}</>,
  <>{Hill}<path d="M4 12.500H26" stroke={navy} strokeWidth="2" />{red(4, 12.5)}{red(26, 12.5)}</>,
  <>{Hill}<path d="M15 4V25" stroke={navy} strokeWidth="2" />{red(15, 4)}{red(15, 26)}</>,
  <>{Hill}<path d="M4 19L26 9" stroke={navy} strokeWidth="2" />{red(4, 19)}{red(26, 9)}</>,
  <>{Hill}<path d="M3 21L14 9H19" stroke={navy} strokeWidth="1.800" /><path d="M18 9L23 5V13Z" fill="#f0d488" stroke="#333" strokeWidth=".7" /><path d="M22 5H27V14H22Z" fill={navy} /></>,
  <><path d="M3 17Q15 5 27 17M3 21Q15 8 27 21M5 24Q15 12 26 25M9 26Q15 17 21 26M3 14Q15 8 27 14" stroke="#9c9c98" /><path d="M6 6L13 25" stroke={navy} strokeWidth="2" />{red(6, 6)}{red(13, 25)}</>,
  <>{Hill}<path d="M11 19L16 3M11 19L26 3M11 19L27 11M11 19H27" stroke={navy} strokeWidth="1.200" />{red(11, 19)}</>,
  <>{Hill}<path d="M4.500 3V27M8.500 3V27M14.500 3V27M23.500 3V27" stroke={navy} strokeWidth="1.400" /></>,
  <><path d="M19 9.500H26M19 12.500H26M19 15.500H26M21 18.500H26" stroke="#b0b0b0" /><path d="M7 22L14 10L20 22" stroke={navy} strokeWidth="1.800" /><g fill="#ee7070" stroke="#d03838" strokeWidth=".6"><circle cx="14" cy="10" r="2" /><circle cx="7" cy="22" r="2" /><circle cx="20" cy="22" r="2" /></g></>,
  <><path d="M3 4L27 26M3 14L15 26M13 3L27 16M27 4L3 26M3 13L13 3M15 26L27 14" stroke="#465c94" strokeWidth="1.200" />{red(16, 16)}</>,
  <>{Hill}<path d="M3 5.500H27M3 24.500H20" stroke={navy} strokeWidth="1.600" /><path d="M3 11.500H27M3 17.500H27" stroke="#465c94" strokeDasharray="2 1" /><path d="M20 16.500H26V25H20ZM20 20.500H26" fill="#eee" stroke="#555" strokeWidth="1.400" /></>,
  <>{Hill}<path d="M3 5.500H27M3 23.500H20" stroke={navy} strokeWidth="1.600" /><path d="M3 10.500H27M3 13.500H27M3 17.500H27" stroke="#465c94" strokeDasharray="2 1" /><rect x="20" y="16" width="7" height="9" fill="#eee" stroke="#555" /><text x="21.300" y="24" fontSize="8" fontWeight="700" fill="#333">4</text></>,
  <>{Hill}<path d="M8 13V6H22V11" stroke="#3452a0" strokeWidth="3.600" /><path d="M4 12H12L8 18ZM18 10H26L22 15Z" fill="#142a74" /></>,
  <><rect x="4" y="8" width="20" height="15" fill="#f3c09c" stroke="#ee8844" strokeWidth="1.400" />{Hill}</>,
  <><circle cx="14.500" cy="14" r="8" fill="#94bfe8" stroke="#4a90d8" strokeWidth="1.300" />{Hill}</>,
  <>{Hill}<text x="5" y="15" fontSize="14" fontWeight="700" fill={navy} fontFamily="Liberation Serif, serif">T</text></>,
  <>{Hill}<rect x="4" y="10" width="8" height="8" fill="#d00000" /><circle cx="21" cy="10" r="5" fill="#5c9a98" /><path d="M12 26L18 19L24 26Z" fill="#003c80" /></>,
  <>{Hill}{Eraser}</>,
  <>{Hill}{Eraser}<rect x="3" y="18" width="15" height="9" fill="#fff" /><text x="4" y="26" fontSize="10" fontWeight="700" fill={navy} textLength="12" lengthAdjust="spacingAndGlyphs">ALL</text></>,
];
function Tools() {
  return (
    <div className="flex w-[38px] shrink-0 flex-col bg-[#efefef] pl-[3px]">
      <div className="flex h-[14px] shrink-0 items-center gap-[2px]">
        {range(0, 7, 1).map((i) => <div key={i} className="h-0.5 w-[3px] bg-[#bbb]" />)}
      </div>
      <div className="flex flex-col gap-[7.5px]">
        {TOOLS.map((t, i) => (
          <div key={i} className="h-[30px] w-[30px] border border-[#9e9e9e] bg-[#e6e5e0] shadow-[inset_1px_1px_0_#fafafa]">
            <svg width="30" height="30" viewBox="1 1 30 30" fill="none" className="block overflow-hidden">{t}</svg>
          </div>
        ))}
      </div>
      <div className="-ml-[3px] mt-[5px] grow border-t border-[#999] bg-white" />
    </div>
  );
}

/* ---------------- window tabs ---------------- */
const TABS = [["실시간계좌관리", 103], ["실시간계좌관리", 103], ["거래내역", 58], ["금일주문체결내", 103], ["주문체결상세", 88], ["키움종합차트", 89], ["주문체결상세", 88], ["키움종합차트", 88], ["대여계좌신청화", 105]];
function Grip({ h }) {
  return (
    <div className="flex w-4 shrink-0 flex-col items-center gap-1 pt-1">
      <svg width="7" height="7" viewBox="0 0 7 7" stroke="#777" strokeWidth="1.400"><path d="M1 1L6 6M6 1L1 6" /></svg>
      <div className="flex gap-0.5" style={{ height: h }}><div className="w-[3px] border border-[#999] bg-white" /><div className="w-[2px] bg-[#ccc]" /></div>
    </div>
  );
}
function WindowTabs() {
  return (
    <div className="flex h-[33px] shrink-0 bg-gradient-to-b from-[#cacaca] to-[#e6e6e6] text-base text-[#3a3a3a]">
      <Grip h={16} />
      {TABS.map(([t, w], i) => (
        <div key={i} className={"flex w-[136.3px] shrink-0 items-center gap-2 pb-[3px] pl-[3px] leading-none " + (i === 7 ? "bg-[#b6b6b6]" : i < 6 ? "border-r border-[#e8e8e8]" : "")}>
          <div className="mt-px flex h-5 w-[17px] items-center justify-center rounded-sm bg-[#5b79b4] text-sm font-bold leading-none text-white">1</div>
          <Fit w={w}>{t}</Fit>
        </div>
      ))}
      <Run from={1247} items={[
        [1858, 1874, <svg width="16" height="18" viewBox="0 0 16 18" fill="#666"><path d="M5 0H11V7H15L8 14L1 7H5ZM2 16H14V18H2Z" transform="scale(.9 .9)" /></svg>],
        [1885, 1886, <div className="h-8 w-px bg-[#f4f4f4]" />],
        [1892, 1911, <svg width="19" height="16" viewBox="0 0 19 16"><rect x="1" y="1" width="17" height="14" fill="#e8f8f6" stroke="#777" strokeWidth="1.500" /><path d="M3 13L7 7L10 10L13 5L16 13Z" fill="#2cb0a4" /></svg>],
      ]} />
    </div>
  );
}

/* ---------------- index and news ticker ---------------- */
const R = "text-[#e02c38]";
function Ticker() {
  const bar = <div className="h-7 w-px bg-[#e4ebf8]" />;
  const name = (w, t) => <div className="flex h-[27px] w-full items-center bg-[#b0c4ee] pl-[9px]"><Fit w={w}>{t}</Fit></div>;
  return (
    <div className="flex h-[57px] shrink-0 bg-[#c4d3ed] text-base leading-none text-[#3a3a42]">
      <Grip h={38} />
      <div className="flex flex-col">
        <Run from={20} className="h-[29px] border-b-2 border-[#d8d8dc]" items={[
          [20, 114, name(60, "KOSPI200")], [128, 174, "326.38", R], [192, 204, <Up />], [213, 243, "3.02", R], [260, 298, "0.93%", R], [316, 368, "144,408", "text-black"],
          [443, 453, <Down />], [465, 466, bar], [467, 561, name(76, "KOSDAQ종합")], [575, 621, "887.78", R], [639, 651, <Up />], [661, 689, "7.71", R], [708, 746, "0.88%", R], [763, 831, "1,590,086", "text-black"],
          [890, 900, <Down />], [913, 914, bar], [923, 1344, "혹한기 훈련 중 숨진 이등병…지휘관에 형사 책임 안 묻는다"],
          [1627, 1687, "23:25:27"], [1704, 1762, "이데일리"], [1777, 1787, <Down />],
          [1805, 1823, <svg width="18" height="16" viewBox="0 0 18 16" fill="#666"><path d="M1 5h3l5-4v14l-5-4H1z" /><path d="M11 4h2v2h-2zM15 4h2v2h-2zM11 8h2v2h-2zM15 8h1v2h-1z" /></svg>],
          [1829, 1888, "신호대기"],
        ]} />
        <Run from={20} className="h-7" items={[
          [20, 114, name(75, "KOSDAQ등락")], [129, 142, <Up />], [142, 166, "306", R], [167, 202, "(↑7)", "text-[#c01018]"], [225, 241, "40", "text-black"],
          [264, 277, <Down c="#1414d0" s={12} />], [278, 345, "1224(↓2)", "text-[#1414c0]"],
          [443, 453, <Down />], [465, 466, bar], [467, 561, name(61, "DOWJONES")], [575, 643, "33,485.29", R], [662, 674, <Up />], [683, 713, "2.57", R], [731, 768, "0.01%", R], [785, 869, "258,682,340", "text-black"],
          [890, 900, <Down />], [913, 914, bar], [923, 1267, "러시아, EU 금수조치 이후 중남미 경유 수출 확대"],
          [1612, 1672, "23:10:32"], [1689, 1763, "로이터뉴스"], [1777, 1787, <Down />],
          [1804, 1820, <svg width="16" height="16" viewBox="0 0 18 18" fill="none" stroke="#777"><circle cx="9" cy="9" r="4.500" strokeWidth="3" /><circle cx="9" cy="9" r="7" strokeWidth="2.500" strokeDasharray="2.750 2.750" /></svg>],
          [1828, 1829, bar], [1836, 1864, "체결"], [1876, 1877, bar], [1882, 1910, "감시"],
        ]} />
      </div>
    </div>
  );
}

/* ---------------- taskbar ---------------- */
const Dot = ({ on, children }) => (
  <div className="flex flex-col items-center">
    <div className="flex h-[30px] items-center">{children}</div>
    <div className={"-mb-2 mt-1 h-1 rounded-full " + (on === "wide" ? "w-5 bg-[#4cc2ff]" : on ? "w-2 bg-[#9aa0a4]" : "w-2")} />
  </div>
);
function Taskbar() {
  return (
    <div className="h-[60px] shrink-0 bg-gradient-to-r from-[#1e1f21] via-[#12242f] to-[#1f2022] text-[15px] text-[#f4f4f4]">
      <Run className="h-[60px]" items={[
        [28, 53, <div className="mb-1 h-[25px] w-[25px] rounded-full bg-gradient-to-br from-[#f8b838] to-[#ee6a14]" />],
        [65, 96, <div className="flex flex-col gap-0"><Fit w={31} className="h-5 leading-5">20°C</Fit><Fit w={29} className="h-5 leading-5">맑음</Fit></div>],
        [478, 507, <svg width="29" height="29" viewBox="0 0 29 29" className="mb-px"><defs><linearGradient id="win" x1="0" y1="0" x2="1" y2="1"><stop stopColor="#84e4ff" /><stop offset="1" stopColor="#0c96ee" /></linearGradient></defs><path d="M0 0H14V14H0ZM15 0H29V14H15ZM0 15H14V29H0ZM15 15H29V29H15Z" fill="url(#win)" /></svg>],
        [525, 797, <div className="mb-px flex h-[39px] w-full items-center overflow-hidden rounded-full border border-[#3a4952] bg-[#2c3b45] pl-3">
          <svg width="21" height="21" viewBox="0 0 21 21" fill="none"><circle cx="10" cy="8.500" r="7" stroke="#1e98e4" strokeWidth="2.500" /><path d="M10.500 1.500A7 7 0 0 1 17 8" stroke="#40d890" strokeWidth="2.500" /><path d="M14 14L19 20" stroke="#1e88dc" strokeWidth="3" /></svg>
          <Fit w={34} className="ml-3 text-base leading-none">검색</Fit>
          <svg width="70" height="38" viewBox="0 0 70 38" className="ml-[122px]"><path d="M0 37Q4 30 20 30H62Q68 30 68 34L60 38H0Z" fill="#6e8c38" /><ellipse cx="15" cy="34" rx="10" ry="2.500" fill="#d8b070" /><circle cx="22" cy="11" r="5.500" fill="#f2b668" /><circle cx="20.500" cy="9.500" r="2.500" fill="#fad8a0" /><path d="M62 8L69 32H54Z" fill="#8ca03c" /><path d="M62 8L66 18H58ZM57 22H68M56 27H69" stroke="#5e7a28" fill="none" /><path d="M40 14L28 31L34 33Z" fill="#6cc0e4" /><path d="M40 14L48 14L55 31L48 33Z" fill="#3090c0" /><path d="M40 14L34 33H48Z" fill="#2c78a8" /><path d="M41 20L36 33H45Z" fill="#f0d078" /><path d="M15 34Q5 29 12 22L14 18Q20 23 21 27Q22 32 15 34Z" fill="#ff8418" /><path d="M15 33Q11 29 15 25Q19 30 15 33Z" fill="#ffe048" /><path d="M8 35L22 32M9 32L22 35" stroke="#7a3c14" strokeWidth="1.600" /></svg>
        </div>],
        [814, 845, <svg width="31" height="28" viewBox="0 0 31 28"><rect x="0" y="8" width="22" height="19" rx="1" fill="#666c70" /><rect x="7.500" y="0" width="22.500" height="20" rx="1" fill="#f2f2f2" /><rect x="7.500" y="8" width="14.500" height="12" fill="#b4b7b9" /></svg>],
        [869, 898, <svg width="29" height="30" viewBox="0 0 29 30" className="mb-1"><defs><linearGradient id="chat" x1="1" y1="0" x2="0" y2="1"><stop stopColor="#7fa8ee" /><stop offset=".5" stopColor="#7a68c8" /><stop offset="1" stopColor="#5a50b8" /></linearGradient></defs><path d="M14.500 1A14 14 0 1 1 9 28L0 29L2 21A14 14 0 0 1 14.500 1Z" fill="url(#chat)" /><rect x="6" y="9" width="12" height="12" rx="2" fill="#fff" /><path d="M19 13L23 10V20L19 17Z" fill="#fff" /></svg>],
        [924, 954, <svg width="30" height="27" viewBox="0 0 30 27" className="mb-1"><path d="M0 1Q0 0 1 0H10L13 3H30V12H0Z" fill="#e0a008" /><path d="M0 5H11L14 3H30V26H0Z" fill="#ffd24c" /><path d="M5 26V21Q5 19 7 19H23Q25 19 25 21V26Z" fill="#1478c8" /><path d="M8 23H22" stroke="#0c5090" strokeWidth="1.500" /></svg>],
        [978, 1008, <Dot on><svg width="30" height="30" viewBox="0 0 30 30"><defs><linearGradient id="edge" x1="0" y1="0" x2="1" y2=".3"><stop stopColor="#1c9ce0" /><stop offset=".5" stopColor="#30c0d8" /><stop offset="1" stopColor="#60e060" /></linearGradient></defs><circle cx="15" cy="15" r="15" fill="#1070c4" /><path d="M0 14A15 15 0 0 1 30 13Q30 20 22 20Q17 20 18.500 16Q19 9 11 9Q3 9 0 14Z" fill="url(#edge)" /><path d="M11 13Q8 20 14 25Q20 29 27 25Q22 30 15 30Q6 27 7 18Q8 14 11 13Z" fill="#0c4c98" /><path d="M18 17Q17 20 22 21Q27 21 29 18L30 21L27 25Q18 26 14 20Q13 15 17 13Q19 14 18 17Z" fill="#12242f" /></svg></Dot>],
        [1034, 1063, <svg width="29" height="31" viewBox="0 0 29 31"><path d="M8 6V1.500H21V6" fill="none" stroke="#30a8e8" strokeWidth="2" /><path d="M0 4H29V26Q29 30 25 30H4Q0 30 0 26Z" fill="#f4f4f4" /><path d="M9 12H14V17H9Z" fill="#f05022" /><path d="M15 12H20V17H15Z" fill="#7eb900" /><path d="M9 18H14V23H9Z" fill="#1aa0ec" /><path d="M15 18H20V23H15Z" fill="#fcb800" /></svg>],
        [1089, 1119, <svg width="30" height="30" viewBox="0 0 30 30" className="mb-1"><rect width="30" height="30" rx="11" fill="#2038c0" /><path d="M20 8A7.500 7.500 0 1 0 18 20L22 24M14 11H24M14 14H21" fill="none" stroke="#fff" strokeWidth="1.900" /></svg>],
        [1144, 1174, <svg width="30" height="30" viewBox="0 0 30 30" className="mb-1"><rect width="30" height="30" rx="11" fill="#604cd0" /><circle cx="15" cy="15" r="9.500" fill="none" stroke="#b4a8f0" strokeWidth="2" /><path d="M10 15H19M16 11.500L19.500 15L16 18.500" fill="none" stroke="#fff" strokeWidth="2" /></svg>],
        [1199, 1229, <svg width="30" height="30" viewBox="0 0 30 30" className="mb-1"><defs><linearGradient id="bx" x1="0" y1="0" x2="1" y2="1"><stop stopColor="#6c88ff" /><stop offset="1" stopColor="#18d0d0" /></linearGradient></defs><rect width="30" height="30" rx="11" fill="url(#bx)" /><path d="M8.500 7H12.500V16Q13 19 16 18.500Q18 18 17.500 15L15.500 13V10Q22 11 22 16.500Q21 23 15 23Q8.500 22.500 8.500 16Z" fill="#fff" /></svg>],
        [1254, 1284, <Dot on><svg width="30" height="30" viewBox="0 0 30 30"><rect width="30" height="30" fill="#fae000" /><ellipse cx="15" cy="14" rx="12.500" ry="9.500" fill="#3a1d1c" /><path d="M9 20L8 27L15 22Z" fill="#3a1d1c" /><text x="6.500" y="17" fontSize="7.500" fontWeight="700" fill="#fae000" textLength="17">TALK</text></svg></Dot>],
        [1309, 1339, <Dot on><svg width="30" height="30" viewBox="0 0 30 30"><circle cx="15" cy="15" r="12.500" fill="#18a4e8" /><circle cx="9" cy="9" r="7.500" fill="#18a4e8" /><circle cx="21" cy="21" r="7.500" fill="#1088d8" /><text x="10" y="22" fontSize="19" fontWeight="700" fill="#fff">S</text></svg></Dot>],
        [1355, 1403, <div className="flex h-[50px] w-full items-center justify-center rounded border border-[#3a4248] bg-[#2a3238]"><Dot on="wide"><svg width="30" height="30" viewBox="0 0 30 30"><rect width="30" height="30" fill="#f2f2f2" /><path d="M2 6H12M6 2L2 12M7 5V16M3 10H12M3 15L12 12M11 3V16M12 7H15" stroke="#d01818" strokeWidth="1.800" fill="none" /><path d="M19 2L21 7M26 2L22 9M16 9L28 6M21 7V15M16 14L28 11M21 14L15 27M22 15L28 27M18 19L25 18" stroke="#d01818" strokeWidth="2.600" fill="none" /></svg></Dot></div>],
        [1433, 1451, <ChevronUp size={18} strokeWidth={2.6} />],
        [1471, 1493, <svg width="22" height="15" viewBox="0 0 22 15"><path d="M5 15A5 5 0 0 1 4 5A6.500 6.500 0 0 1 16 5A5 5 0 0 1 17 15Z" fill="#f0f0f0" /><path d="M4 5A6.500 6.500 0 0 1 16 5L9 9Z" fill="#b8b8b8" /></svg>],
        [1511, 1533, <div className="relative"><RefreshCw size={20} strokeWidth={1.6} /><div className="absolute -bottom-0.5 -right-0.5 h-[11px] w-[11px] rounded-full bg-[#ff9810]" /></div>],
        [1549, 1577, <div className="flex text-[#a0e0ec]"><Mic size={15} className="-mt-1" /><Navigation size={13} className="mt-1" /></div>],
        [1594, 1611, "가", "text-lg leading-none"], [1641, 1659, "한", "text-lg leading-none"],
        [1687, 1707, <Wifi size={20} strokeWidth={2.2} />],
        [1717, 1737, <Volume2 size={20} strokeWidth={1.8} />],
        [1747, 1767, <svg width="20" height="13" viewBox="0 0 20 13" fill="none" stroke="#fff" strokeWidth="1.500"><rect x="1" y="1" width="15" height="11" rx="2.500" /><path d="M18.500 4V9" strokeWidth="2" /><rect x="3" y="3.500" width="4" height="6" fill="#fff" stroke="none" /></svg>],
        [1788, 1866, <div className="flex w-full flex-col items-end"><Fit w={71} className="h-[21px] leading-5">오후 11:27</Fit><Fit w={78} className="h-5 leading-5">2023-04-10</Fit></div>],
        [1875, 1894, <div className="flex h-[19px] w-[19px] items-center justify-center rounded-full bg-[#4cc2ff] text-xs leading-none text-[#10202c]">4</div>],
      ]} />
    </div>
  );
}

export default function App() {
  return (
    <div className="flex h-[1080px] w-[1920px] flex-col overflow-hidden bg-[#3a5693] font-['Noto_Sans_CJK_KR','Noto_Sans',sans-serif] leading-none">
      <TitleBar />
      <div className="mx-1 flex h-[983px] shrink-0 flex-col bg-[#e9e9e9]">
        <MenuBar />
        <div className="flex h-[839px] shrink-0">
          <div className="flex w-[1874px] shrink-0 flex-col">
            <Toolbar />
            <div className="pl-1"><Chart /></div>
            <Playback />
          </div>
          <Tools />
        </div>
        <div className="h-px shrink-0 bg-[#c4c4c4]" />
        <WindowTabs />
        <Ticker />
      </div>
      <div className="h-1.5 shrink-0 bg-[#3a5693]" />
      <Taskbar />
    </div>
  );
}
